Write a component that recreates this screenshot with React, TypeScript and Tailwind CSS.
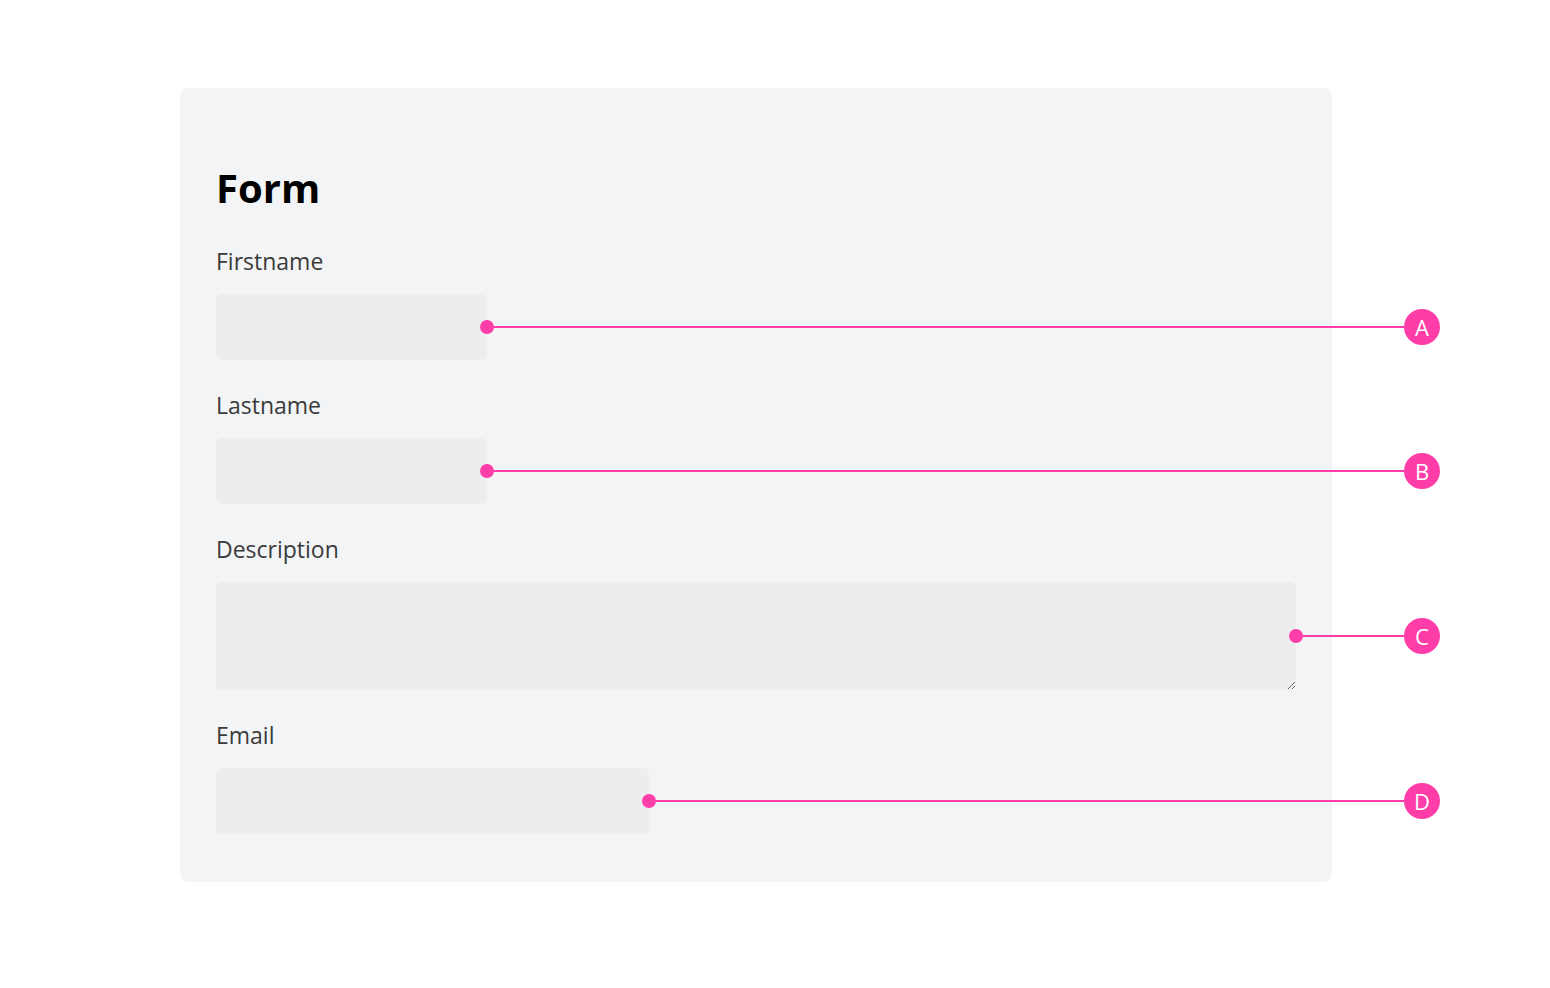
import React from "react";

const fields = [
  { label: "Firstname", width: "w-[271px]", left: "left-[271px]", tag: "A", kind: "input" },
  { label: "Lastname", width: "w-[271px]", left: "left-[271px]", tag: "B", kind: "input" },
  { label: "Description", width: "w-[1080px]", left: "left-[1080px]", tag: "C", kind: "textarea" },
  { label: "Email", width: "w-[433px]", left: "left-[433px]", tag: "D", kind: "input" },
];

function Marker({ tag, left }: { tag: string; left: string }) {
  return (
    <div
      className={`absolute inset-y-0 right-[-144px] ${left} flex items-center pointer-events-none`}
    >
      <span className="w-[14px] h-[14px] -ml-[7px] rounded-full bg-[#ff3da8] shrink-0" />
      <span className="flex-1 h-[2px] bg-[#ff3da8]" />
      <span className="w-9 h-9 rounded-full bg-[#ff3da8] text-white text-[22px] leading-none flex items-center justify-center shrink-0">
        {tag}
      </span>
    </div>
  );
}

export default function App() {
  return (
    <div
      className="min-h-screen bg-white pt-[88px] pl-[180px]"
      style={{ fontFamily: '"Open Sans", "Noto Sans", sans-serif' }}
    >
      <form className="w-[1152px] bg-[#f3f4f6] rounded-lg px-9 pt-[76px] pb-12">
        <h1 className="text-[40px] leading-[48px] font-bold text-black mb-[34px]">Form</h1>

        {fields.map((f, i) => (
          <div key={f.label} className={i > 0 ? "mt-[30px]" : ""}>
            <label className="block text-[23px] leading-[30px] text-[#3b3b3b] mb-[18px]">
              {f.label}
            </label>
            <div className="relative">
              {f.kind === "textarea" ? (
                <textarea
                  className={`${f.width} h-[108px] block bg-[#ecedef] rounded-md outline-none`}
                />
              ) : (
                <input
                  type="text"
                  className={`${f.width} h-[66px] block bg-[#ecedef] rounded-md outline-none`}
                />
              )}
              <Marker tag={f.tag} left={f.left} />
            </div>
          </div>
        ))}
      </form>
    </div>
  );
}
